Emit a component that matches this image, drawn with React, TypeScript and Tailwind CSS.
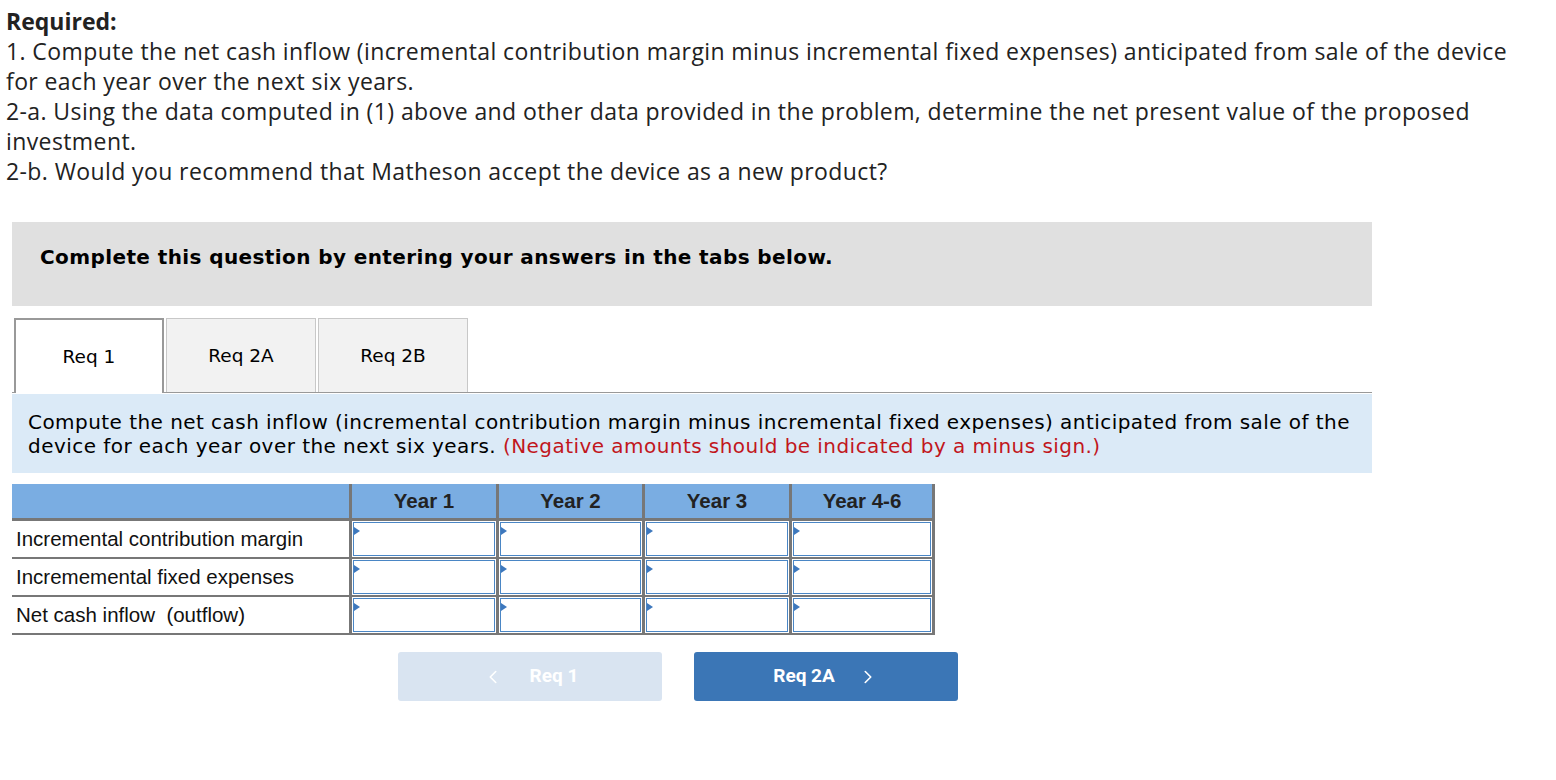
import { ChevronLeft, ChevronRight } from "lucide-react";

const years = ["Year 1", "Year 2", "Year 3", "Year 4-6"];
const rows = [
  "Incremental contribution margin",
  "Incrememental fixed expenses",
  "Net cash inflow  (outflow)",
];
const colW = ["w-[147px]", "w-[146px]", "w-[147px]", "w-[146px]"];

function InputCell() {
  return (
    <div className="relative h-full border-[1.5px] border-[#4a86c5] bg-white">
      <span className="absolute left-0 top-[4px] h-0 w-0 border-y-[4px] border-l-[6px] border-y-transparent border-l-[#3e78bd]" />
    </div>
  );
}

export default function App() {
  return (
    <div className="min-h-screen bg-white text-[#222]">
      <div className="w-[1514px] px-[6px] pt-[6px] font-['Open_Sans',sans-serif] text-[23px] leading-[30px] tracking-[0.4px]">
        <p className="font-bold tracking-normal">Required:</p>
        <p>
          1. Compute the net cash inflow (incremental contribution margin minus incremental fixed expenses) anticipated from sale of the device for each year over the next six years.
        </p>
        <p>
          2-a. Using the data computed in (1) above and other data provided in the problem, determine the net present value of the proposed investment.
        </p>
        <p>2-b. Would you recommend that Matheson accept the device as a new product?</p>
      </div>

      <div className="mx-[12px] mt-[36px] w-[1360px] font-['DejaVu_Sans',Verdana,sans-serif]">
        <div className="h-[84px] bg-[#e0e0e0] pl-[28px] pt-[20px]">
          <p className="text-[20px] font-bold tracking-[0.4px] text-black">
            Complete this question by entering your answers in the tabs below.
          </p>
        </div>

        <div className="mt-[12px] flex gap-[2px] border-b border-[#999] pl-[2px]">
          <div className="-mb-px flex h-[75px] w-[150px] items-center justify-center border-x-2 border-t-2 border-[#999] bg-white text-[18.5px] text-black">
            Req 1
          </div>
          <div className="flex h-[74px] w-[150px] items-center justify-center border border-b-0 border-[#c8c8c8] bg-[#f2f2f2] text-[18.5px] text-black">
            Req 2A
          </div>
          <div className="flex h-[74px] w-[150px] items-center justify-center border border-b-0 border-[#c8c8c8] bg-[#f2f2f2] text-[18.5px] text-black">
            Req 2B
          </div>
        </div>

        <div className="mt-px bg-[#dbeaf7] px-[16px] pb-[15px] pt-[16px] text-[20px] leading-[24px] tracking-[0.45px] text-black">
          Compute the net cash inflow (incremental contribution margin minus incremental fixed expenses) anticipated from sale of the device for each year over the next six years.{" "}
          <span className="text-[#c1161c]">(Negative amounts should be indicated by a minus sign.)</span>
        </div>
      </div>

      <div className="ml-[12px] mt-[11px] w-[923px] font-['Liberation_Sans',Arial,sans-serif] text-[20.5px]">
        <div className="flex h-[37px] border-b-[3px] border-[#777] bg-[#7aade2]">
          <div className="w-[337px]" />
          {years.map((y, i) => (
            <div
              key={y}
              className={`flex items-center justify-center border-l-[3px] border-[#777] font-bold text-[#222] ${colW[i]} ${i === 3 ? "border-r-[3px]" : ""}`}
            >
              {y}
            </div>
          ))}
        </div>
        {rows.map((r) => (
          <div key={r} className="flex h-[38px] border-b-[2px] border-[#777]">
            <div className="flex w-[337px] items-center whitespace-pre pl-[4px] text-[#111]">{r}</div>
            {years.map((y, i) => (
              <div
                key={y}
                className={`border-l-[3px] border-[#777] p-[1px] ${colW[i]} ${i === 3 ? "border-r-[3px]" : ""}`}
              >
                <InputCell />
              </div>
            ))}
          </div>
        ))}
      </div>

      <div className="mt-[17px] flex gap-[32px] pl-[398px] font-['Roboto',sans-serif] text-[19px] font-bold text-white">
        <div className="flex h-[49px] w-[264px] items-center justify-center gap-[26px] rounded-[3px] bg-[#d9e4f1]">
          <ChevronLeft size={22} strokeWidth={1.75} />
          <span>Req 1</span>
        </div>
        <div className="flex h-[49px] w-[264px] items-center justify-center gap-[22px] rounded-[3px] bg-[#3b76b6]">
          <span>Req 2A</span>
          <ChevronRight size={22} strokeWidth={1.75} />
        </div>
      </div>
    </div>
  );
}
